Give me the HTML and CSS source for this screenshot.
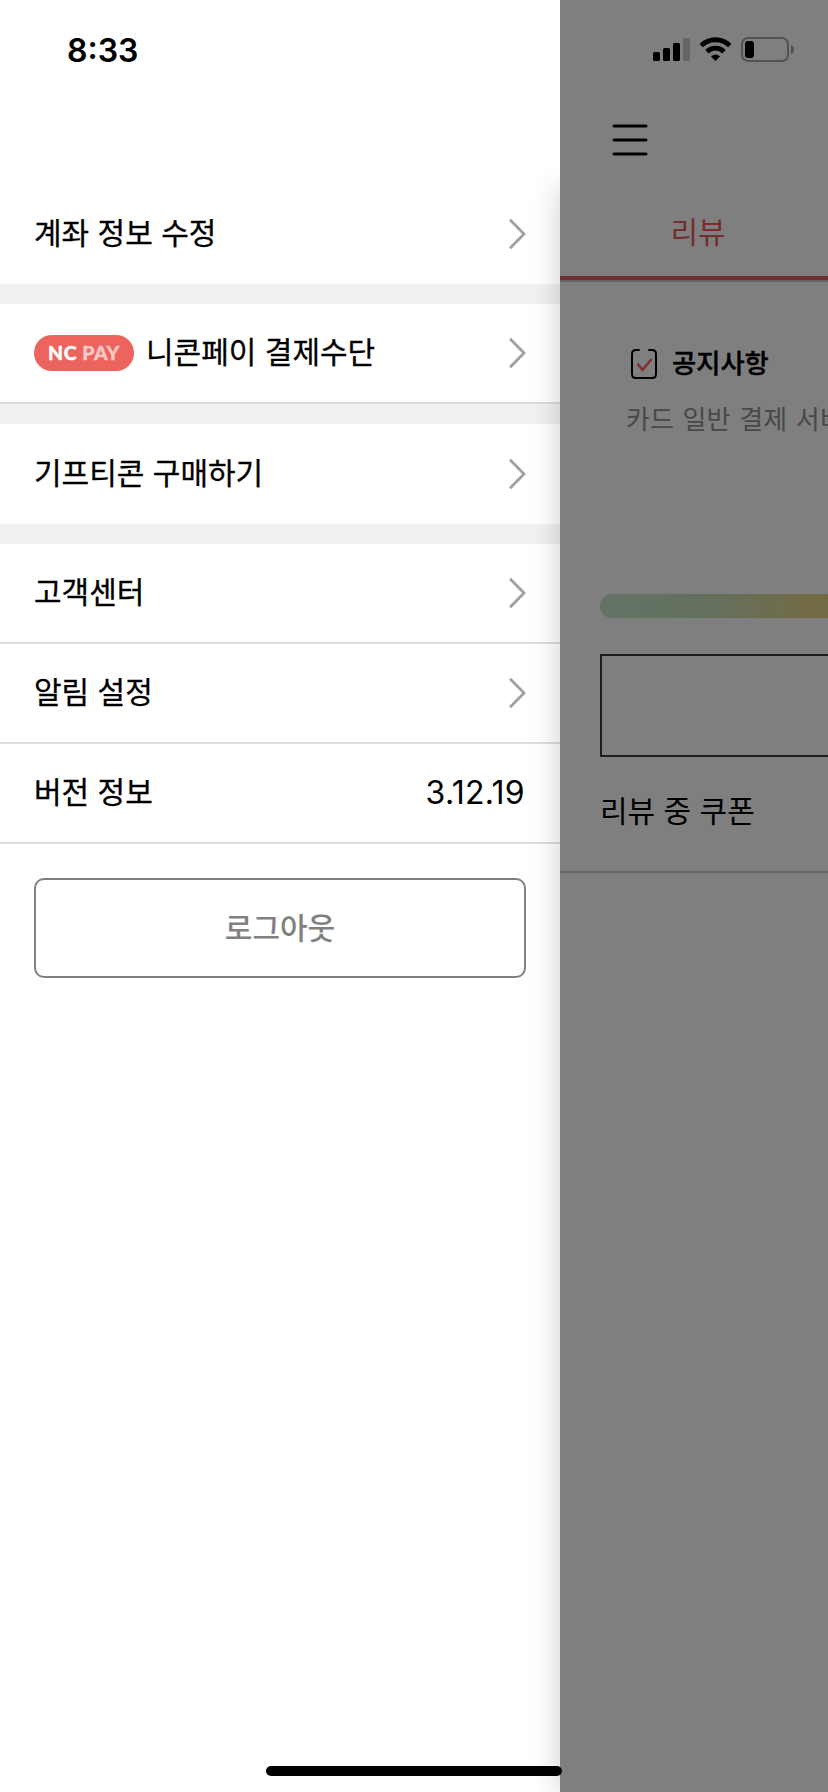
FILE: index.html
```html
<!DOCTYPE html>
<html lang="ko">
<head>
<meta charset="utf-8">
<title>메뉴</title>
<link rel="stylesheet" href="styles.css">
</head>
<body>
<div class="screen">
  <nav class="drawer">
    <div class="clock">8:33</div>
    <a class="row"><span class="label">계좌 정보 수정</span><svg class="chevron" viewBox="0 0 18 32"><path d="M2 1.8 16 16 2 30.2"/></svg></a>
    <div class="gap"></div>
    <a class="row lined"><span class="badge">NC <span class="badge-pay">PAY</span></span><span class="label">니콘페이 결제수단</span><svg class="chevron" viewBox="0 0 18 32"><path d="M2 1.8 16 16 2 30.2"/></svg></a>
    <div class="gap"></div>
    <a class="row"><span class="label">기프티콘 구매하기</span><svg class="chevron" viewBox="0 0 18 32"><path d="M2 1.8 16 16 2 30.2"/></svg></a>
    <div class="gap"></div>
    <a class="row lined"><span class="label">고객센터</span><svg class="chevron" viewBox="0 0 18 32"><path d="M2 1.8 16 16 2 30.2"/></svg></a>
    <a class="row lined"><span class="label">알림 설정</span><svg class="chevron" viewBox="0 0 18 32"><path d="M2 1.8 16 16 2 30.2"/></svg></a>
    <div class="row lined"><span class="label">버전 정보</span><span class="version">3.12.19</span></div>
    <button class="logout">로그아웃</button>
    <div class="edge-shadow"></div>
  </nav>
  <main class="page">
    <div class="status">
      <svg width="144" height="28" viewBox="652 36 144 28">
        <rect x="653" y="52" width="7" height="9" rx="1.5"/>
        <rect x="663" y="48" width="7" height="13" rx="1.5"/>
        <rect x="673" y="43" width="7" height="18" rx="1.5"/>
        <rect x="683" y="38" width="7" height="23" rx="1.5" fill="#646464"/>
        <g fill="none" stroke="#000" stroke-width="4.8">
          <path d="M701.2 45.6A20.4 20.4 0 0 1 729.8 45.6"/>
          <path d="M707 51.700A12.1 12.1 0 0 1 724 51.700"/>
        </g>
        <path d="M715.5 61 711 56.4Q715.5 52.4 720 56.4Z"/>
        <rect x="742" y="38" width="46" height="23" rx="6" fill="none" stroke="#535353" stroke-width="2"/>
        <rect x="745" y="41" width="9" height="17" rx="3"/>
        <path d="M791 45Q794 46 794 49.500T791 54Z" fill="#535353"/>
      </svg>
    </div>
    <div class="topbar">
      <svg width="36" height="32" viewBox="0 0 36 32"><path d="M2 2H34M2 16H34M2 30H34" fill="none" stroke="#000" stroke-width="3" stroke-linecap="round"/></svg>
    </div>
    <div class="tab">리뷰</div>
    <section class="notice">
      <h2 class="notice-title">
        <svg class="notice-icon" width="28" height="32" viewBox="0 0 28 32" fill="none" stroke-linecap="round" stroke-linejoin="round">
          <path d="M9 2H6Q2 2 2 6V26Q2 30 6 30H22Q26 30 26 26V6Q26 2 22 2H19" stroke="#000" stroke-width="2"/>
          <path d="M8.200 16.500 12.500 22 20.800 12" stroke="#7d302e" stroke-width="2.600"/>
        </svg>
        공지사항
      </h2>
      <p class="notice-text">카드 일반 결제 서비</p>
    </section>
    <div class="meter"></div>
    <div class="box"></div>
    <div class="coupon">리뷰 중 쿠폰</div>
  </main>
  <div class="home-bar"></div>
</div>
</body>
</html>
```
FILE: styles.css
```css
* { box-sizing: border-box; }

body {
  margin: 0;
  font-family: "Noto Sans CJK KR", sans-serif;
  font-size: 30px;
  color: #000;
}

svg { display: block; }

.screen {
  position: relative;
  display: flex;
  width: 828px;
  height: 1792px;
  overflow: hidden;
}

.drawer {
  position: relative;
  display: flex;
  flex-direction: column;
  width: 560px;
  flex: none;
  overflow: hidden;
  background: #fff;
}

.clock {
  height: 184px;
  padding: 30px 0 0 67px;
  font: 600 32px/41px Inter, sans-serif;
}

.row {
  display: flex;
  align-items: center;
  height: 100px;
  flex: none;
  padding: 0 34px;
  line-height: 44px;
}

.label {
  padding-bottom: 6px;
  -webkit-text-stroke: 0.3px #000;
}

.lined { border-bottom: 2px solid #dcdcdc; }

.gap {
  height: 20px;
  flex: none;
  background: #eff1f3;
}

.chevron {
  width: 18px;
  height: 32px;
  margin-left: auto;
  fill: none;
  stroke: #a0a0a0;
  stroke-width: 2.8;
}

.badge {
  width: 100px;
  height: 36px;
  margin: 0 12px 0 0;
  border-radius: 18px;
  background: #ed645f;
  color: #fff;
  font: 900 19.5px/36px Lato, sans-serif;
  letter-spacing: 0.5px;
  text-align: center;
  -webkit-text-stroke: 0.4px;
}

.badge-pay { color: #fbc8c6; }

.version {
  margin: 0 1px 0 auto;
  font: 400 32px/44px Inter, sans-serif;
  letter-spacing: 0.3px;
}

.logout {
  width: 492px;
  height: 100px;
  flex: none;
  margin: 34px 0 0 34px;
  padding: 0 0 4px;
  border: 2px solid #808080;
  border-radius: 10px;
  background: none;
  color: #808080;
  font: 500 30px/44px "Noto Sans CJK KR", sans-serif;
}

.edge-shadow {
  position: absolute;
  top: 188px;
  bottom: 0;
  left: 560px;
  width: 268px;
  box-shadow: 0 0 28px rgba(0, 0, 0, 0.2);
}

.page {
  display: flex;
  flex-direction: column;
  flex: 1;
  min-width: 0;
  overflow: hidden;
  background: #7f7f7f;
}

.status {
  height: 100px;
  padding: 36px 0 0 92px;
}

.topbar {
  height: 88px;
  padding: 24px 0 0 52px;
}

.tab {
  height: 92px;
  width: 276px;
  padding-top: 20px;
  border-bottom: 4px solid #722f2f;
  box-shadow: 0 2px 0 #636366;
  color: #722f2f;
  line-height: 44px;
  text-align: center;
}

.notice {
  height: 314px;
  padding: 62px 0 0 66px;
  white-space: nowrap;
}

.notice-title {
  display: flex;
  align-items: center;
  gap: 14px;
  margin: 0;
  padding-left: 4px;
  font-size: 26.3px;
  font-weight: 500;
  line-height: 40px;
  -webkit-text-stroke: 0.4px #000;
}

.notice-icon { margin-top: 3px; }

.notice-text {
  margin: 17px 0 0;
  color: #484848;
  font-size: 26px;
  line-height: 38px;
  word-spacing: 1.5px;
}

.meter {
  height: 24px;
  margin-left: 40px;
  border-radius: 12px 0 0 12px;
  background: linear-gradient(90deg, #637365 0, #63705f 100px, #6a6e54 150px, #726c46 205px, #736a43 228px);
}

.box {
  height: 103px;
  margin: 36px 0 0 40px;
  border: 2px solid #1d1d1d;
  border-right: 0;
}

.coupon {
  height: 116px;
  padding: 30px 0 0 40px;
  border-bottom: 2px solid #646464;
  line-height: 44px;
}

.home-bar {
  position: absolute;
  left: 266px;
  bottom: 16px;
  width: 296px;
  height: 10px;
  border-radius: 5px;
  background: #000;
}
```
